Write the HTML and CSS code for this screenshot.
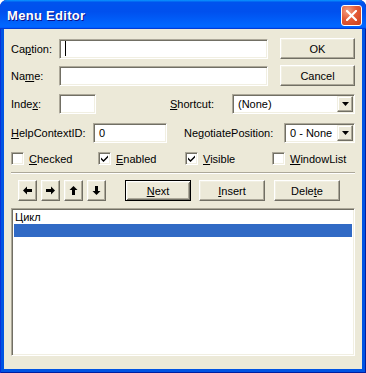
FILE: index.html
```html
<!doctype html>
<html lang="en">
<head>
	<meta charset="UTF-8">
	<title>Menu Editor</title>
	<link rel="stylesheet" href="styles.css">
</head>
<body>
	<div class="window">
		<div class="titlebar">
			<span class="title">Menu Editor</span>
			<span class="close">
				<svg width="11" height="11" viewBox="0 0 11 11"><path d="M1 1L10 10M10 1L1 10" stroke="#fff" stroke-width="2.2" stroke-linecap="square"/></svg>
			</span>
		</div>
		<div class="client">
			<div class="row r1">
				<span class="lbl w-cap">Ca<u>p</u>tion:</span>
				<div class="field long"><span class="caret"></span></div>
				<span class="btn cmd">OK</span>
			</div>
			<div class="row r2">
				<span class="lbl w-cap">Na<u>m</u>e:</span>
				<div class="field long"></div>
				<span class="btn cmd">Cancel</span>
			</div>
			<div class="row r3">
				<span class="lbl w-cap">Inde<u>x</u>:</span>
				<div class="field index"></div>
				<span class="lbl w-short"><u>S</u>hortcut:</span>
				<div class="field combo c-short">
					<span class="val">(None)</span>
					<span class="drop"><svg width="7" height="4" viewBox="0 0 7 4"><path d="M0 0H7L3.5 4Z"/></svg></span>
				</div>
			</div>
			<div class="row r4">
				<span class="lbl w-help"><u>H</u>elpContextID:</span>
				<div class="field help"><span class="val">0</span></div>
				<span class="lbl w-neg">Ne<u>g</u>otiatePosition:</span>
				<div class="field combo c-neg">
					<span class="val">0 - None</span>
					<span class="drop"><svg width="7" height="4" viewBox="0 0 7 4"><path d="M0 0H7L3.5 4Z"/></svg></span>
				</div>
			</div>
			<div class="checks">
				<span class="chk"><span class="box"></span><span><u>C</u>hecked</span></span>
				<span class="chk"><span class="box"><svg width="9" height="9" viewBox="0 0 9 9"><path d="M1 3.5L3.5 6L8 1.5V3.5L3.5 8L1 5.5Z"/></svg></span><span><u>E</u>nabled</span></span>
				<span class="chk"><span class="box"><svg width="9" height="9" viewBox="0 0 9 9"><path d="M1 3.5L3.5 6L8 1.5V3.5L3.5 8L1 5.5Z"/></svg></span><span><u>V</u>isible</span></span>
				<span class="chk"><span class="box"></span><span><u>W</u>indowList</span></span>
			</div>
			<div class="sep"></div>
			<div class="row r6">
				<span class="btn arrow"><svg width="9" height="9" viewBox="0 0 9 9"><path d="M0 4.5L4 0.5V3H9V6H4V8.5Z"/></svg></span>
				<span class="btn arrow"><svg width="9" height="9" viewBox="0 0 9 9"><path d="M9 4.5L5 0.5V3H0V6H5V8.5Z"/></svg></span>
				<span class="btn arrow"><svg width="9" height="9" viewBox="0 0 9 9"><path d="M4.5 0L8.5 4H6V9H3V4H0.5Z"/></svg></span>
				<span class="btn arrow"><svg width="9" height="9" viewBox="0 0 9 9"><path d="M4.5 9L8.5 5H6V0H3V5H0.5Z"/></svg></span>
				<span class="btn wide def"><span><u>N</u>ext</span></span>
				<span class="btn wide ins"><span><u>I</u>nsert</span></span>
				<span class="btn wide del"><span>Dele<u>t</u>e</span></span>
			</div>
			<div class="field list">
				<div class="item">Цикл</div>
				<div class="item sel"></div>
			</div>
		</div>
	</div>
</body>
</html>
```
FILE: styles.css
```css
* {
	margin: 0;
	padding: 0;
	box-sizing: border-box;
}

body {
	background: #fff;
	font-family: "Liberation Sans", Arial, sans-serif;
	font-size: 11px;
	color: #000;
}

u {
	text-decoration: underline;
	text-underline-offset: 1px;
}

.window {
	width: 366px;
	height: 373px;
	background: #0054E3;
	border-radius: 7px 7px 0 0;
	box-shadow: inset 1px 0 #0831D9, inset -1px 0 #001EA0, inset 0 -1px #001EA0;
	display: flex;
	flex-direction: column;
	overflow: hidden;
}

.titlebar {
	height: 29px;
	flex: none;
	display: flex;
	align-items: center;
	padding: 0 4px 0 7px;
	background: linear-gradient(180deg, #0997ff, #0053ee 8%, #0050ee 40%, #06f 88%, #06f 93%, #005bff 95%, #003dd7 96%, #003dd7);
	border-radius: 7px 7px 0 0;
}

.title {
	flex: 1;
	color: #fff;
	font-family: "Liberation Sans", Arial, sans-serif;
	font-weight: bold;
	font-size: 13px;
	letter-spacing: 0.3px;
	text-shadow: 1px 1px #0F1089;
	margin-top: 1px;
}

.close {
	width: 21px;
	height: 21px;
	border: 1px solid #fff;
	border-radius: 3px;
	background: radial-gradient(circle at 30% 25%, #F3A184, #E45B37 45%, #CC3E1B);
	display: flex;
	align-items: center;
	justify-content: center;
	margin-top: 2px;
}

.client {
	flex: 1;
	margin: 0 4px 4px;
	background: #ECE9D8;
	padding: 9px 7px 0;
}

.row {
	display: flex;
	align-items: center;
}

.r1, .r2 { height: 21px; }
.r2 { margin-top: 6px; }
.r3 { height: 20px; margin-top: 8px; }
.r4 { height: 20px; margin-top: 9px; }

.lbl { flex: none; white-space: nowrap; }
.w-cap { width: 48px; }
.w-short { width: 62px; margin-left: 74px; }
.w-help { width: 82px; }
.w-neg { width: 100px; margin-left: 17px; }

.field {
	flex: none;
	height: 20px;
	background: #fff;
	border: 1px solid;
	border-color: #ACA899 #fff #fff #ACA899;
	box-shadow: inset 1px 1px #716F64, inset -1px -1px #F1EFE2;
	display: flex;
	align-items: center;
}

.long { width: 209px; }
.index { width: 37px; }
.help { width: 74px; }
.c-short { width: 123px; }
.c-neg { width: 71px; }

.val {
	flex: 1;
	padding-left: 5px;
	white-space: nowrap;
}

.caret {
	width: 1px;
	height: 15px;
	background: #000;
	margin-left: 5px;
}

.drop {
	flex: none;
	width: 16px;
	height: 16px;
	margin-right: 1px;
	background: #ECE9D8;
	border: 1px solid;
	border-color: #F1EFE2 #716F64 #716F64 #F1EFE2;
	box-shadow: inset -1px -1px #ACA899, inset 1px 1px #fff;
	display: flex;
	align-items: center;
	justify-content: center;
}

.btn {
	flex: none;
	height: 21px;
	background: #ECE9D8;
	border: 1px solid;
	border-color: #fff #716F64 #716F64 #fff;
	box-shadow: inset -1px -1px #ACA899, inset 1px 1px #F1EFE2;
	display: flex;
	align-items: center;
	justify-content: center;
}

.cmd {
	width: 75px;
	margin-left: 12px;
}

.checks {
	display: grid;
	grid-template-columns: 87px 87px 87px 87px;
	height: 13px;
	margin-top: 9px;
}

.chk {
	display: flex;
	align-items: center;
	gap: 5px;
	white-space: nowrap;
}

.box {
	flex: none;
	width: 13px;
	height: 13px;
	background: #fff;
	border: 1px solid;
	border-color: #ACA899 #fff #fff #ACA899;
	box-shadow: inset 1px 1px #716F64, inset -1px -1px #F1EFE2;
	display: flex;
	align-items: center;
	justify-content: center;
}

.sep {
	height: 2px;
	margin-top: 7px;
	border-top: 1px solid #ACA899;
	border-bottom: 1px solid #fff;
}

.r6 {
	height: 21px;
	margin-top: 6px;
	padding-left: 7px;
	gap: 4px;
}

.arrow { width: 19px; }

.wide { width: 66px; }
.def {
	margin-left: 15px;
	border: 1px solid #000;
	box-shadow: inset 1px 1px #fff, inset -1px -1px #716F64, inset 2px 2px #F1EFE2, inset -2px -2px #ACA899;
}
.ins { margin-left: 4px; }
.del { margin-left: 5px; }

.list {
	width: 344px;
	height: 148px;
	margin-top: 7px;
	display: block;
	padding: 2px;
}

.item {
	height: 13px;
	line-height: 13px;
	padding-left: 1px;
}

.sel { background: #316AC5; }
```
